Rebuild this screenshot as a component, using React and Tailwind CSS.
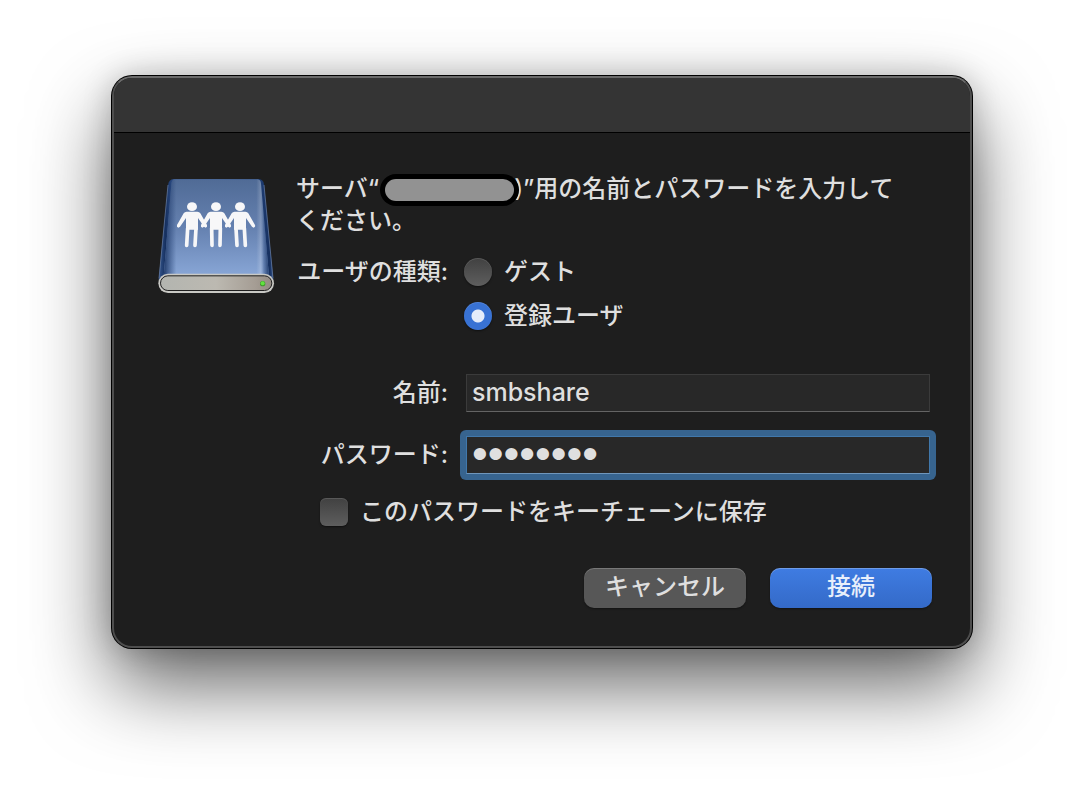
import { useState } from "react";

function ShareDriveIcon() {
  return (
    <svg viewBox="33 36 360 360" className="mt-1 size-[120px] shrink-0" aria-hidden="true">
      <defs>
        <linearGradient id="side" x1="0" x2="1" y1="0" y2="0">
          <stop offset="0" stopColor="#35568d" />
          <stop offset="0.06" stopColor="#16305f" />
          <stop offset="0.12" stopColor="#2c4c84" />
          <stop offset="0.5" stopColor="#3b5f9c" />
          <stop offset="0.9" stopColor="#1d3b70" />
          <stop offset="0.97" stopColor="#162f5e" />
          <stop offset="1" stopColor="#35568d" />
        </linearGradient>
        <linearGradient id="top" x1="0" x2="0" y1="0" y2="1">
          <stop offset="0" stopColor="#506b96" />
          <stop offset="0.5" stopColor="#6581b0" />
          <stop offset="1" stopColor="#89a7d7" />
        </linearGradient>
        <linearGradient id="fade" x1="0" x2="1" y1="0" y2="0">
          <stop offset="0" stopColor="#16305f" stopOpacity="0.9" />
          <stop offset="0.12" stopColor="#1d3a6e" stopOpacity="0" />
          <stop offset="0.88" stopColor="#fff" stopOpacity="0" />
          <stop offset="0.92" stopColor="#fff" stopOpacity="0.18" />
          <stop offset="0.95" stopColor="#1d3a6e" stopOpacity="0.3" />
          <stop offset="1" stopColor="#16305f" stopOpacity="0.9" />
        </linearGradient>
        <linearGradient id="front" x1="0" x2="1" y1="0" y2="0">
          <stop offset="0" stopColor="#b3b5b0" />
          <stop offset="0.5" stopColor="#bcb9b1" />
          <stop offset="0.85" stopColor="#a59d94" />
          <stop offset="1" stopColor="#938b83" />
        </linearGradient>
        <g id="torso">
          <ellipse cx="0" cy="125" rx="15" ry="13" />
          <path d="M-16 140H16Q22 140 25 145L45 180Q47 186 41 188L36 185L18 159V194H-18V159L-36 185L-41 188Q-47 186 -45 180L-25 145Q-22 140 -16 140Z" />
        </g>
      </defs>
      <path d="M86 42H341Q355 43 357 57L385 345H41L69 60Q71 43 86 42Z" fill="url(#side)" />
      <path d="M88 43H338Q347 44 348 56L372 335H56L79 58Q80 44 88 43Z" fill="url(#top)" />
      <path d="M88 43H338Q347 44 348 56L372 335H56L79 58Q80 44 88 43Z" fill="url(#fade)" />
      <path d="M69 60L42 340M357 60L384 340" stroke="#6f87ad" strokeWidth="2" fill="none" />
      <g fill="#f7f7f8">
        <use href="#torso" x="141" />
        <use href="#torso" x="213" />
        <use href="#torso" x="285" />
      </g>
      <g fill="none" stroke="#f7f7f8" strokeWidth="11" strokeLinecap="round">
        <path d="M128 190L125 241M153 190L150 241" />
        <path d="M200 190L201 241M226 190L225 241" />
        <path d="M273 190L276 241M298 190L301 241" />
      </g>
      <rect x="40" y="326" width="347" height="58" rx="29" fill="#c9c9c5" />
      <rect x="46.5" y="332.5" width="334" height="44" rx="22" fill="url(#front)" stroke="#1f1f1f" strokeWidth="3" />
      <circle cx="353" cy="356" r="8" fill="#3f9a2a" />
      <circle cx="353" cy="355" r="6" fill="#62e440" />
    </svg>
  );
}

const radioClass =
  "size-7 shrink-0 appearance-none rounded-full bg-linear-to-b from-[#414141] to-[#5e5e5e] shadow-[inset_0_1px_0_rgba(255,255,255,0.12),0_1px_2px_rgba(0,0,0,0.5)] outline-none checked:bg-radial checked:from-[#e4ecfa] checked:from-[6px] checked:to-[#3872d4] checked:to-[7px]";

const fieldClass =
  "h-[38px] w-full min-w-0 rounded-none border border-[#3b3b3b] border-b-[#646464] bg-[#282828] px-[5px] pb-0.5 text-[25px] font-medium text-[#dfdfdf] outline-none";

export default function App() {
  const [kind, setKind] = useState("user");
  const [name, setName] = useState("smbshare");
  const [password, setPassword] = useState("password");
  const [save, setSave] = useState(false);

  return (
    <main
      lang="ja"
      className="min-h-screen bg-white px-6 pt-[76px] pb-[148px] font-['Inter','Noto_Sans_CJK_JP',sans-serif] text-2xl leading-8 font-medium text-[#dfdfdf]"
    >
      <form
        role="dialog"
        aria-labelledby="message"
        onSubmit={(e) => e.preventDefault()}
        className="mx-auto w-full max-w-[860px] rounded-[20px] border-2 border-[#4e4e4e] border-t-[#6a6a6a] bg-[#1e1e1e] shadow-[0_0_0_1px_#000,0_36px_80px_rgba(0,0,0,0.62),0_0_30px_rgba(0,0,0,0.2)]"
      >
        <header className="h-[55px] rounded-t-[18px] border-b border-black bg-[#343434]" />

        <div className="flex gap-5 pt-10 pr-[38px] pb-[38px] pl-[42px]">
          <ShareDriveIcon />

          <div className="min-w-0 flex-1">
            <p id="message" className="pr-6">
              サーバ“
              <span className="relative z-10 -my-2 ml-1.5 inline-block h-[22px] w-[129px] rounded-full bg-[#929292] align-middle ring-5 ring-black" />
              )”用の名前とパスワードを入力してください。
            </p>

            <div className="mt-[13px] grid grid-cols-[152px_1fr] items-center gap-x-4">
              <span id="kind" className="text-right whitespace-nowrap">ユーザの種類:</span>
              <div role="radiogroup" aria-labelledby="kind" className="contents">
                <label className="flex h-11 items-center gap-3">
                  <input type="radio" name="kind" checked={kind === "guest"} onChange={() => setKind("guest")} className={radioClass} />
                  ゲスト
                </label>
                <label className="col-start-2 flex h-11 items-center gap-3">
                  <input type="radio" name="kind" checked={kind === "user"} onChange={() => setKind("user")} className={radioClass} />
                  登録ユーザ
                </label>
              </div>
            </div>

            <div className="mt-9 grid grid-cols-[152px_1fr] items-center gap-x-[18px] gap-y-6 pr-0.5">
              <label htmlFor="name" className="text-right">名前:</label>
              <input id="name" type="text" value={name} onChange={(e) => setName(e.target.value)} className={fieldClass} />
              <label htmlFor="password" className="text-right">パスワード:</label>
              <div className="-m-1.5 rounded-md bg-[#37648f] p-1.5">
                <input
                  id="password"
                  type="password"
                  value={password}
                  onChange={(e) => setPassword(e.target.value)}
                  className="block h-[38px] w-full min-w-0 rounded-none border border-[#4178ab] border-b-[#6f96bb] bg-[#282828] px-[5px] pb-0.5 font-['Liberation_Sans',sans-serif] text-[45px] font-normal text-[#dfdfdf] outline-none"
                />
              </div>
            </div>

            <label className="mt-6 flex h-7 items-center gap-3 pl-6">
              <input
                type="checkbox"
                checked={save}
                onChange={(e) => setSave(e.target.checked)}
                className="size-7 shrink-0 appearance-none rounded-md bg-linear-to-b from-[#414141] to-[#5e5e5e] shadow-[inset_0_1px_0_rgba(255,255,255,0.12),0_1px_2px_rgba(0,0,0,0.5)] checked:from-[#3f7ee2] checked:to-[#336bc9]"
              />
              このパスワードをキーチェーンに保存
            </label>

            <div className="mt-[42px] flex justify-end gap-6">
              <button type="button" className="h-10 w-[162px] rounded-[10px] bg-[#575757] pb-0.5 shadow-[inset_0_1px_0_rgba(255,255,255,0.2),0_1px_2px_rgba(0,0,0,0.4)]">
                キャンセル
              </button>
              <button type="submit" className="h-10 w-[162px] rounded-[10px] bg-linear-to-b from-[#3f7ce2] to-[#346ac8] pb-0.5 text-[#e8effb] shadow-[inset_0_1px_0_rgba(255,255,255,0.25),0_1px_2px_rgba(0,0,0,0.4)]">
                接続
              </button>
            </div>
          </div>
        </div>
      </form>
    </main>
  );
}
